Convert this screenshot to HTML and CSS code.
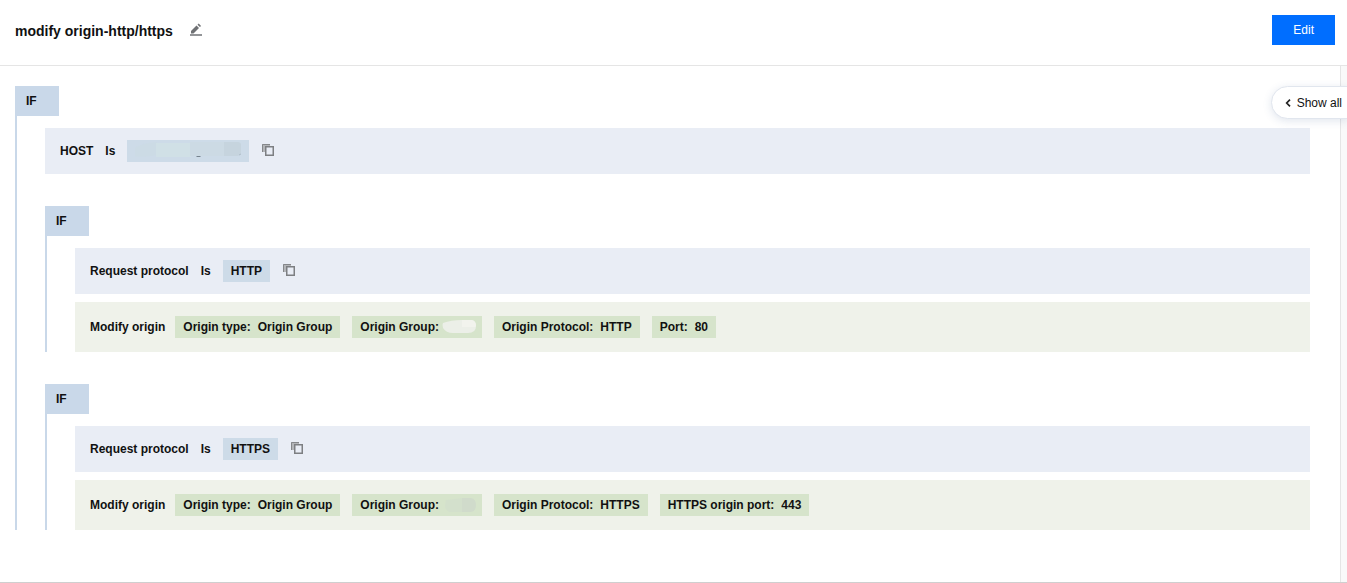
FILE: index.html
```html
<!DOCTYPE html>
<html lang="en">
<head>
    <meta charset="UTF-8">
    <meta name="viewport" content="width=device-width, initial-scale=1.0">
    <title>modify origin-http/https</title>
    <link rel="stylesheet" href="styles.css">
</head>
<body>
    <svg class="sprite" aria-hidden="true">
        <symbol id="icon-copy" viewBox="0 1 14 14">
            <path d="M1 9V1h8v3H5v5z" fill="#b3b5b8"/>
            <path d="M1.500 9V1.500H9" fill="none" stroke="#85878a"/>
            <rect x="4.750" y="3.750" width="7.500" height="8.500" fill="#e9edf5" stroke="#7d7f82" stroke-width="1.500"/>
        </symbol>
    </svg>

    <header class="header">
        <h1 class="title">modify origin-http/https</h1>
        <button class="icon-btn" type="button" aria-label="Rename">
            <svg width="14" height="14" viewBox="0 0 14 14">
                <path d="M1 10.500V8L6.500 2.500l2.500 2.500L3.500 10.500z" fill="#6f7174"/>
                <path d="M7.500 1.700l1.200-1.200 2.400 2.400-1.200 1.200z" fill="#6f7174"/>
                <path d="M0 12h12" stroke="#939598" stroke-width="2"/>
            </svg>
        </button>
        <button class="edit-btn" type="button">Edit</button>
    </header>

    <main class="content">
        <div class="rules">
            <section class="rule">
                <div class="if">IF</div>
                <div class="rule-body">
                    <div class="condition">
                        <span>HOST</span>
                        <span>Is</span>
                        <span class="value">
                            <svg width="106" height="22" viewBox="0 0 106 22" aria-hidden="true">
                                <path d="M-2 9q8-6 24-7v13q-12 3-23 1z" fill="#ccdbe5"/>
                                <path d="M21 3h35v14H21z" fill="#d0e0e6"/>
                                <path d="M55 2h35v14H55z" fill="#ccdae4"/>
                                <path d="M89 2h14q5 1 4 8-1 6-6 6H89z" fill="#c6d4de"/>
                                <path d="M61 16h5l-1 1h-3z" fill="#75828d"/>
                                <path d="M104 15l2-1" stroke="#aebdc8"/>
                            </svg>
                        </span>
                        <button class="icon-btn" type="button" aria-label="Copy"><svg width="14" height="14"><use href="#icon-copy"/></svg></button>
                    </div>

                    <section class="rule">
                        <div class="if">IF</div>
                        <div class="rule-body">
                            <div class="condition">
                                <span>Request protocol</span>
                                <span>Is</span>
                                <span class="value">HTTP</span>
                                <button class="icon-btn" type="button" aria-label="Copy"><svg width="14" height="14"><use href="#icon-copy"/></svg></button>
                            </div>
                            <div class="action">
                                <span class="action-name">Modify origin</span>
                                <span class="tag"><span>Origin type:</span> <span>Origin Group</span></span>
                                <span class="tag tag-group"><span>Origin Group:</span>
                                    <svg width="36" height="16" viewBox="0 0 36 16" aria-hidden="true">
                                        <path d="M2 4q8-3 19-3h10q4 1 4 6 0 7-8 7H12Q5 14 2 9q-1-3 0-5z" fill="#ecefe8"/>
                                        <path d="M21 1h10q4 1 4 6l-1 1H21z" fill="#f2f3ed"/>
                                    </svg>
                                </span>
                                <span class="tag"><span>Origin Protocol:</span> <span>HTTP</span></span>
                                <span class="tag"><span>Port:</span> <span>80</span></span>
                            </div>
                        </div>
                    </section>

                    <section class="rule">
                        <div class="if">IF</div>
                        <div class="rule-body">
                            <div class="condition">
                                <span>Request protocol</span>
                                <span>Is</span>
                                <span class="value">HTTPS</span>
                                <button class="icon-btn" type="button" aria-label="Copy"><svg width="14" height="14"><use href="#icon-copy"/></svg></button>
                            </div>
                            <div class="action">
                                <span class="action-name">Modify origin</span>
                                <span class="tag"><span>Origin type:</span> <span>Origin Group</span></span>
                                <span class="tag tag-group"><span>Origin Group:</span>
                                    <svg width="36" height="16" viewBox="0 0 36 16" aria-hidden="true">
                                        <path d="M5 3l16-2v14H8q-4-2-4-7z" fill="#d3e0cc"/>
                                        <path d="M21 1h9q5 1 5 7t-5 7h-9z" fill="#d0dbcb"/>
                                    </svg>
                                </span>
                                <span class="tag"><span>Origin Protocol:</span> <span>HTTPS</span></span>
                                <span class="tag"><span>HTTPS origin port:</span> <span>443</span></span>
                            </div>
                        </div>
                    </section>
                </div>
            </section>
        </div>

        <button class="show-all" type="button">
            <svg width="6" height="8" viewBox="0 0 6 8" aria-hidden="true">
                <path d="M5 .7L1.700 4 5 7.300" fill="none" stroke="#222" stroke-width="1.700"/>
            </svg>
            Show all
        </button>
    </main>
</body>
</html>
```
FILE: styles.css
```css
* {
    box-sizing: border-box;
}

body {
    display: flex;
    flex-direction: column;
    min-height: 100vh;
    margin: 0;
    border-bottom: 1px solid #cfcfcf;
    background-color: #fff;
    color: #111;
    font-family: "Liberation Sans", Arial, sans-serif;
    font-size: 12px;
    line-height: 18px;
}

button {
    font-family: inherit;
    font-size: 12px;
    border: none;
    cursor: pointer;
}

.sprite {
    position: absolute;
    width: 0;
    height: 0;
}

.header {
    display: flex;
    align-items: center;
    height: 66px;
    padding: 0 12px 5px 15px;
    border-bottom: 1px solid #e5e5e5;
}

.title {
    margin: 0 17px 0 0;
    padding-top: 2px;
    font-size: 14px;
    line-height: 20px;
}

.icon-btn {
    display: flex;
    padding: 0;
    background: none;
}

.edit-btn {
    height: 30px;
    margin-left: auto;
    padding: 0 21px;
    background-color: #006eff;
    color: #fff;
}

.content {
    position: relative;
    display: flex;
    flex: 1;
    padding-right: 6px;
    background-color: #f9f9f9;
    overflow: hidden;
}

.rules {
    flex: 1;
    padding: 20px 30px 52px 15px;
    border-right: 1px solid #e5e5e5;
    background-color: #fff;
    font-weight: bold;
}

.rule {
    border-left: 2px solid #c9d8e9;
}

.if {
    width: 42px;
    height: 30px;
    padding-left: 9px;
    background-color: #c9d8e9;
    line-height: 30px;
}

.rule-body {
    padding: 12px 0 0 28px;
}

.rule-body .rule {
    margin-top: 32px;
}

.condition,
.action {
    display: flex;
    align-items: center;
    gap: 12px;
    padding: 0 15px;
}

.condition {
    min-height: 46px;
    background-color: #e9edf5;
}

.action {
    min-height: 50px;
    margin-top: 8px;
    background-color: #eff2ea;
}

.action-name {
    margin-right: -2px;
}

.value,
.tag {
    display: flex;
    align-items: center;
    height: 22px;
    padding: 0 8px;
}

.value {
    background-color: #cddbe8;
}

.tag {
    gap: 7px;
    background-color: #d6e4cb;
}

.tag-group {
    gap: 2px;
    padding-right: 5px;
}

/* sticks to the right edge, over the rules */
.show-all {
    position: absolute;
    top: 20px;
    right: -1px;
    display: flex;
    align-items: center;
    gap: 6px;
    height: 33px;
    padding: 0 5px 0 13px;
    border: 1px solid #e1e6ee;
    border-radius: 17px 0 0 17px;
    background-color: #fff;
    box-shadow: 0 2px 8px rgba(54, 88, 140, 0.15);
    color: #111;
}
```
